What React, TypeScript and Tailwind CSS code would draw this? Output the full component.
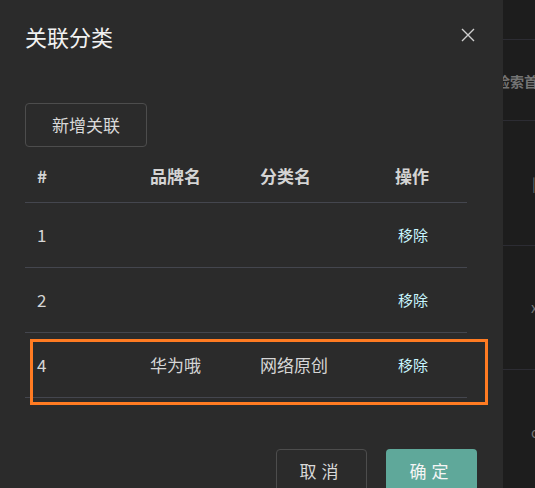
import React from "react";

const rows = [
  { id: "1", brand: "", cat: "" },
  { id: "2", brand: "", cat: "" },
  { id: "4", brand: "华为哦", cat: "网络原创" },
];

const font = { fontFamily: '"Microsoft YaHei", "Noto Sans CJK SC", "Liberation Sans", sans-serif' };

export default function App() {
  return (
    <div className="relative flex h-[488px] w-[535px] overflow-hidden bg-[#1d1d1d]" style={font}>
      {/* dialog */}
      <div className="z-10 flex w-[503px] shrink-0 flex-col bg-[#2b2b2b] pl-[25px] pr-[26px]">
        <div className="flex h-[78px] shrink-0 items-start justify-between pt-[19px]">
          <div className="text-[22px] leading-[34px] text-[#f2f2f2]">关联分类</div>
          <button className="mt-[8px] mr-[1px] text-[#cfcfcf]" aria-label="close">
            <svg width="16" height="16" viewBox="0 0 16 16" fill="none">
              <path d="M2 2L14 14M14 2L2 14" stroke="currentColor" strokeWidth="1.4" />
            </svg>
          </button>
        </div>
        <div className="shrink-0 pt-[25px]">
          <button className="h-[44px] w-[122px] rounded-[4px] border border-[#4d4d4d] text-[17px] text-[#d9d9d9]">
            新增关联
          </button>
        </div>
        <div className="w-[442px] shrink-0">
          <div className="flex h-[56px] items-center border-b border-[#44464e] pt-[2px] text-[17px] font-bold text-[#d4d4d4]">
            <div className="w-[125px] pl-[12px]">#</div>
            <div className="w-[110px]">品牌名</div>
            <div className="w-[135px]">分类名</div>
            <div>操作</div>
          </div>
          {rows.map((r) => (
            <div key={r.id} className="flex h-[65px] items-center border-b border-[#44464e] text-[17px] text-[#d6d6d6]">
              <div className="w-[125px] pl-[12px]">{r.id}</div>
              <div className="w-[110px]">{r.brand}</div>
              <div className="w-[138px]">{r.cat}</div>
              <div className="text-[15px] text-[#c8f6ff]">移除</div>
            </div>
          ))}
        </div>
        <div className="mt-[51px] flex shrink-0 justify-end gap-[19px]">
          <button className="h-[44px] w-[91px] rounded-[4px] border border-[#4d4d4d] text-[17px] tracking-[5px] text-[#d9d9d9]">
            取消
          </button>
          <button className="h-[44px] w-[91px] rounded-[4px] bg-[#5fa89a] text-[17px] tracking-[5px] text-[#f5f5f5]">
            确定
          </button>
        </div>
      </div>

      {/* page behind */}
      <div className="flex flex-1 flex-col overflow-hidden text-[14px] text-[#747474]">
        <div className="h-[40px] shrink-0 border-b border-[#2c2c33]" />
        <div className="flex h-[81px] shrink-0 items-center whitespace-nowrap border-b border-[#2c2c33] pt-[2px] font-bold">
          <span className="-ml-[7px]">检索首页</span>
        </div>
        <div className="flex h-[125px] shrink-0 items-center whitespace-nowrap border-b border-[#2c2c33] pl-[29px]">|</div>
        <div className="flex h-[124px] shrink-0 items-center whitespace-nowrap border-b border-[#2c2c33] pl-[28px]">x</div>
        <div className="flex h-[124px] shrink-0 items-center whitespace-nowrap pl-[28px]">c</div>
      </div>

      {/* highlight annotation */}
      <div className="pointer-events-none absolute left-[30px] top-[339px] z-20 h-[66px] w-[458px] border-[3px] border-[#ff7b22]" />
    </div>
  );
}
